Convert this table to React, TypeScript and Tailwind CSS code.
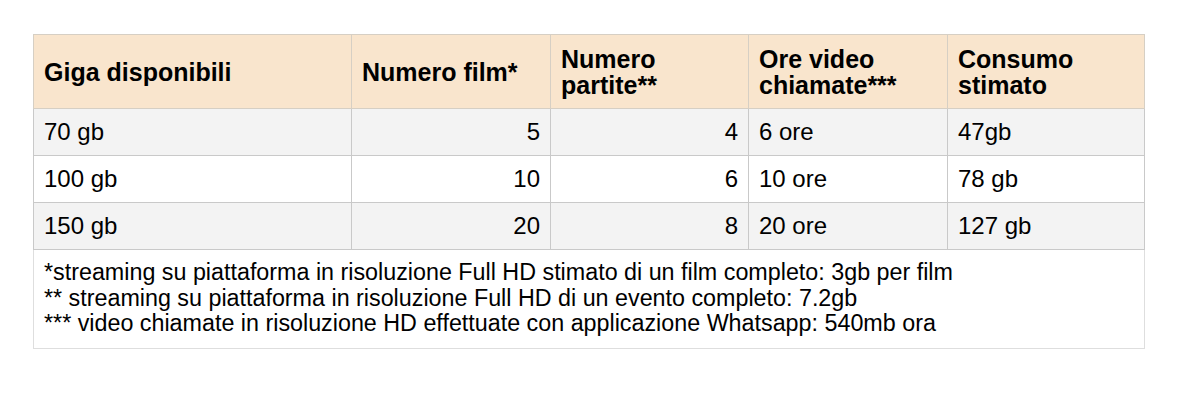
const rows = [
  { giga: '70 gb', film: '5', partite: '4', ore: '6 ore', consumo: '47gb', shaded: true },
  { giga: '100 gb', film: '10', partite: '6', ore: '10 ore', consumo: '78 gb', shaded: false },
  { giga: '150 gb', film: '20', partite: '8', ore: '20 ore', consumo: '127 gb', shaded: true },
];

export default function App() {
  return (
    <div className="w-[1200px] h-[400px] bg-white pt-[34px] pl-[33px]" style={{ fontFamily: '"Liberation Sans", Arial, sans-serif' }}>
      <table className="w-[1111px] table-fixed border-collapse text-[24px] text-black">
        <colgroup>
          <col className="w-[318px]" />
          <col className="w-[199px]" />
          <col className="w-[198px]" />
          <col className="w-[199px]" />
          <col className="w-[197px]" />
        </colgroup>
        <thead>
          <tr className="h-[74px] bg-[#f9e5cd] text-[25px] font-bold leading-[26px]">
            <th className="border border-[#d6cfc4] px-[10px] text-left align-middle">Giga disponibili</th>
            <th className="border border-[#d6cfc4] px-[10px] text-left align-middle">Numero film*</th>
            <th className="border border-[#d6cfc4] px-[10px] text-left align-middle">Numero<br />partite**</th>
            <th className="border border-[#d6cfc4] px-[10px] text-left align-middle">Ore video<br />chiamate***</th>
            <th className="border border-[#d6cfc4] px-[10px] text-left align-middle">Consumo<br />stimato</th>
          </tr>
        </thead>
        <tbody>
          {rows.map((r) => (
            <tr key={r.giga} className={`h-[47px] leading-[26px] ${r.shaded ? 'bg-[#f3f3f3]' : 'bg-white'}`}>
              <td className="border border-[#c9c9c9] px-[10px]">{r.giga}</td>
              <td className="border border-[#c9c9c9] px-[10px] text-right">{r.film}</td>
              <td className="border border-[#c9c9c9] px-[10px] text-right">{r.partite}</td>
              <td className="border border-[#c9c9c9] px-[10px]">{r.ore}</td>
              <td className="border border-[#c9c9c9] px-[10px]">{r.consumo}</td>
            </tr>
          ))}
          <tr>
            <td colSpan={5} className="border border-[#dedede] px-[10px] pt-[10px] pb-[11px] text-[23.3px] leading-[25.5px]">
              <div>*streaming su piattaforma in risoluzione Full HD stimato di un film completo: 3gb per film</div>
              <div>** streaming su piattaforma in risoluzione Full HD di un evento completo: 7.2gb</div>
              <div>*** video chiamate in risoluzione HD effettuate con applicazione Whatsapp: 540mb ora</div>
            </td>
          </tr>
        </tbody>
      </table>
    </div>
  );
}
